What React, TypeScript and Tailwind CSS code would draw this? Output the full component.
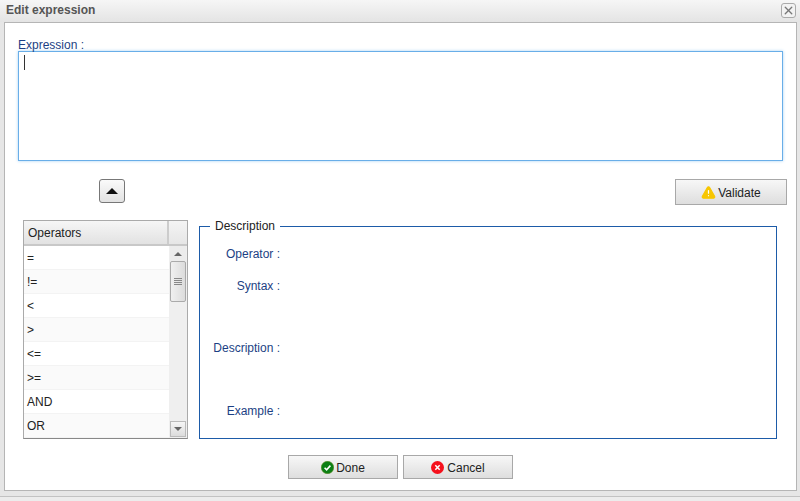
import { TriangleAlert, X } from "lucide-react";

const operators = ["=", "!=", "<", ">", "<=", ">=", "AND", "OR"];
const fields = [
  { label: "Operator :", h: "h-8" },
  { label: "Syntax :", h: "h-[62px]" },
  { label: "Description :", h: "h-[63px]" },
  { label: "Example :", h: "h-6" },
];

const btn =
  "flex items-center justify-center border border-[#a8a8a8] bg-gradient-to-b from-[#f7f7f7] to-[#dedede] text-[12px] text-[#222] pt-px";

export default function App() {
  return (
    <div className="w-[800px] h-[501px] overflow-hidden bg-[#e6e6e6] font-['Liberation_Sans',Arial,sans-serif] flex flex-col">
      {/* Title bar */}
      <div className="h-[22px] shrink-0 flex items-center justify-between pl-[6px] pr-[4px] bg-gradient-to-b from-[#f6f6f6] to-[#e4e4e4]">
        <span className="text-[12px] font-bold text-[#555] -mt-[3px]">Edit expression</span>
        <button className="w-[15px] h-[15px] -mt-[2px] flex items-center justify-center border border-[#aaa] rounded-[3px] bg-[#f2f2f2] text-[#777]">
          <X size={13} strokeWidth={2.5} />
        </button>
      </div>

      {/* Panel */}
      <div className="mx-[4px] mr-[3px] h-[469px] shrink-0 border border-[#b5b5b5] bg-white pt-[15px] pl-[13px] pr-[12px]">
        <div className="h-[13px] text-[12px] leading-[14px] text-[#1c3f84]">Expression :</div>
        <div className="h-[110px] w-[765px] border border-[#69aee8] shadow-[0_0_3px_#a9d2f3] pt-[3px] pl-[5px]">
          <div className="w-px h-[15px] bg-[#333]" />
        </div>

        {/* Toolbar row */}
        <div className="mt-[18px] flex items-start justify-between w-[769px]">
          <button className="ml-[81px] w-[26px] h-[24px] flex items-center justify-center border border-[#777] rounded-[3px] bg-gradient-to-b from-[#fafafa] to-[#e2e2e2]">
            <span className="border-x-[6px] border-x-transparent border-b-[6px] border-b-[#111]" />
          </button>
          <button className={`${btn} w-[112px] h-[26px] gap-[2px]`}>
            <TriangleAlert size={15} fill="#f7c600" stroke="#f7c600" className="[&>path:nth-child(n+2)]:stroke-white" />
            Validate
          </button>
        </div>

        {/* Operators + description */}
        <div className="mt-[15px] flex items-start">
          <div className="ml-[5px] w-[165px] h-[219px] shrink-0 border border-[#aaa] border-b-[#888] flex flex-col overflow-hidden">
            <div className="h-[25px] shrink-0 flex border-b-2 border-[#c8c8c8]">
              <div className="flex-1 flex items-center pl-[4px] text-[12px] text-[#222] bg-gradient-to-b from-[#f6f6f6] to-[#e2e2e2] border-r-2 border-[#ccc]">
                Operators
              </div>
              <div className="w-[18px] bg-gradient-to-b from-[#f4f4f4] to-[#e6e6e6]" />
            </div>
            <div className="flex-1 flex min-h-0">
              <div className="flex-1 flex flex-col">
                {operators.map((op, i) => (
                  <div
                    key={op}
                    className={`h-[24px] shrink-0 flex items-center pl-[3px] text-[12px] text-[#222] border-b border-[#f3f3f3] ${
                      i % 2 ? "bg-[#fafafa]" : "bg-white"
                    }`}
                  >
                    {op}
                  </div>
                ))}
              </div>
              {/* Scrollbar */}
              <div className="w-[18px] shrink-0 bg-[#efefef] flex flex-col items-center justify-between pb-[1px]">
                <div className="w-[16px]">
                  <div className="h-[15px] flex items-center justify-center bg-[#ececec]">
                    <span className="border-x-[4px] border-x-transparent border-b-[4px] border-b-[#666]" />
                  </div>
                  <div className="h-[41px] border border-[#aaa] rounded-[2px] bg-gradient-to-r from-[#f0f0f0] to-[#dcdcdc] flex flex-col items-center justify-center gap-[1px]">
                    <span className="w-[8px] h-px bg-[#888]" />
                    <span className="w-[8px] h-px bg-[#888]" />
                    <span className="w-[8px] h-px bg-[#888]" />
                    <span className="w-[8px] h-px bg-[#888]" />
                  </div>
                </div>
                <div className="w-[16px] h-[16px] flex items-center justify-center border border-[#bbb] bg-gradient-to-b from-[#f6f6f6] to-[#dcdcdc]">
                  <span className="border-x-[4px] border-x-transparent border-t-[4px] border-t-[#666]" />
                </div>
              </div>
            </div>
          </div>

          <fieldset className="ml-[11px] -mt-px w-[578px] h-[220px] border border-[#1d5ba8] pl-[13px] min-w-0">
            <legend className="-ml-[3px] px-[5px] text-[12px] leading-[14px] text-[#222]">Description</legend>
            <div className="mt-[14px] flex flex-col">
              {fields.map((f) => (
                <div key={f.label} className={`${f.h} w-[67px] text-right text-[12px] leading-[14px] text-[#1c3f84] whitespace-nowrap`}>
                  {f.label}
                </div>
              ))}
            </div>
          </fieldset>
        </div>

        {/* Footer buttons */}
        <div className="mt-[16px] flex justify-center gap-[5px] pr-[1px]">
          <button className={`${btn} w-[110px] h-[24px] gap-[2px]`}>
            <svg width="13" height="13" viewBox="0 0 13 13" className="-mt-px">
              <circle cx="6.5" cy="6.5" r="6.2" fill="#0c7f14" stroke="#5a8a20" strokeWidth="0.6" />
              <path d="M3.6 6.8 L5.6 8.8 L9.4 4.6" fill="none" stroke="#fff" strokeWidth="1.6" />
            </svg>
            Done
          </button>
          <button className={`${btn} w-[110px] h-[24px] gap-[3px]`}>
            <svg width="13" height="13" viewBox="0 0 13 13" className="-mt-px">
              <circle cx="6.5" cy="6.5" r="6.5" fill="#f5101c" />
              <path d="M4.3 4.3 L8.7 8.7 M8.7 4.3 L4.3 8.7" fill="none" stroke="#fff" strokeWidth="1.5" />
            </svg>
            Cancel
          </button>
        </div>
      </div>

      <div className="mt-[5px] border-t border-[#c2c2c2] flex-1 bg-[#ececec]" />
    </div>
  );
}
